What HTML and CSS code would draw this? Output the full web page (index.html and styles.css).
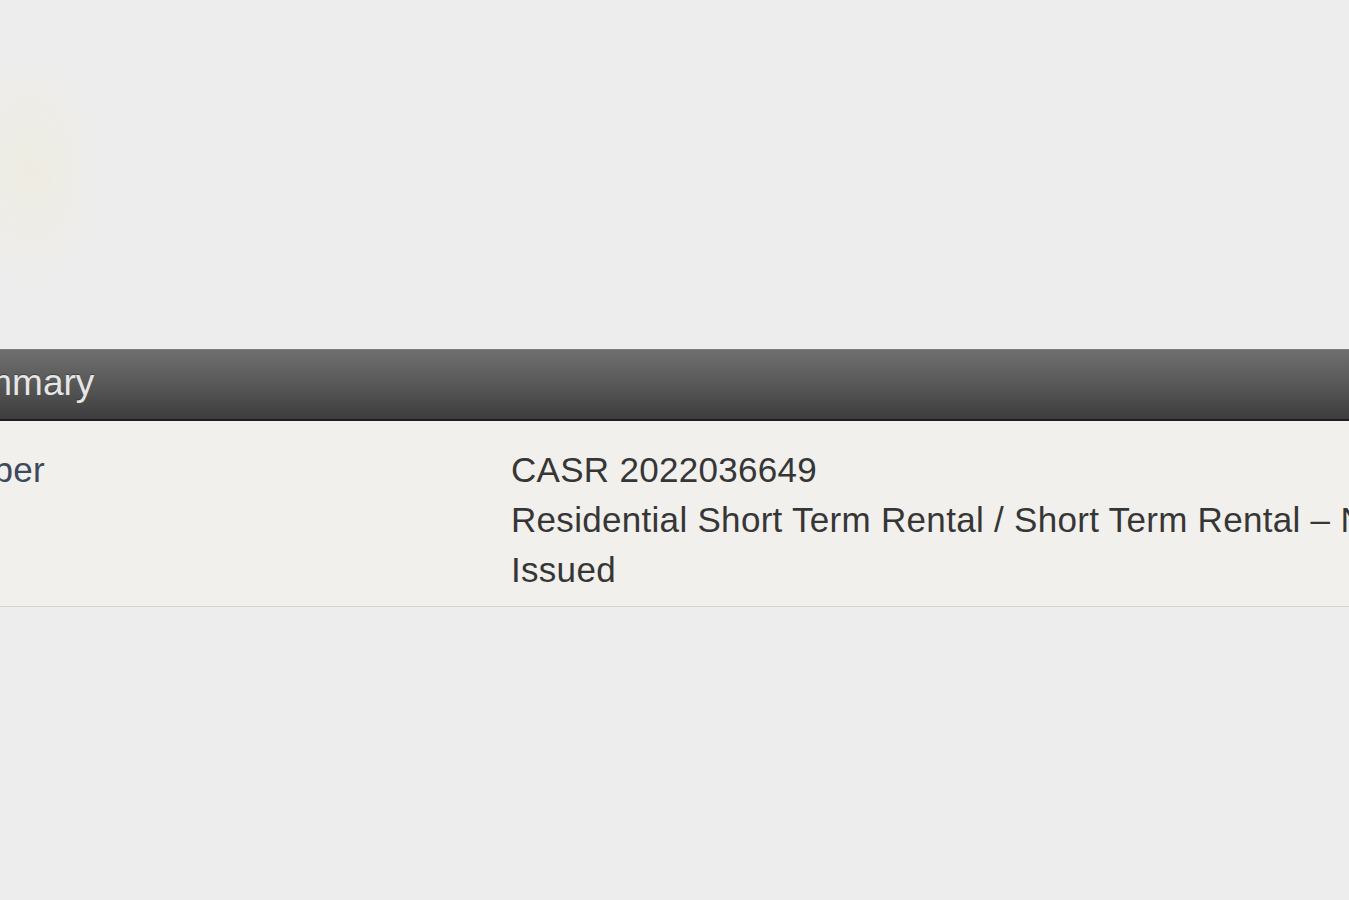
FILE: index.html
```html
<!DOCTYPE html>
<html lang="en">
<head>
<meta charset="utf-8">
<title>Record Summary</title>
<link rel="stylesheet" href="styles.css">
</head>
<body>
  <main class="page">
    <section class="summary">
      <h2 class="summary-title">Summary</h2>
      <div class="summary-row">
        <div class="summary-label">Record Number</div>
        <div class="summary-values">
          <div class="summary-line">CASR 2022036649</div>
          <div class="summary-line">Residential Short Term Rental / Short Term Rental – Non-Owner Occupied</div>
          <div class="summary-line">Issued</div>
        </div>
      </div>
    </section>
  </main>
</body>
</html>
```

FILE: styles.css
```css
html, body {
  margin: 0;
  padding: 0;
}

body {
  width: 1349px;
  height: 900px;
  overflow: hidden;
  background:
    radial-gradient(ellipse 80px 130px at 30px 170px, rgba(238, 236, 224, 0.9), rgba(237, 237, 238, 0) 100%),
    #ededee;
  font-family: "Liberation Sans", Arial, Helvetica, sans-serif;
}

.page {
  padding-top: 349px;
}

/* the panel is wider than the window and starts left of it */
.summary {
  margin-left: -260px;
  width: 1900px;
}

.summary-title {
  margin: 0;
  height: 72px;
  padding-left: 196px;
  box-sizing: border-box;
  border-top: 1px solid #7c7c7c;
  border-bottom: 2px solid #1e1e1e;
  background: linear-gradient(to bottom, #6f6f6f 0%, #5a5a5a 45%, #3d3d3d 100%);
  color: #e6e6e6;
  font-size: 37px;
  font-weight: normal;
  line-height: 66px;
  text-shadow: 0 -1px 0 rgba(0, 0, 0, 0.35);
  white-space: nowrap;
}

.summary-row {
  display: grid;
  grid-template-columns: 771px 1fr;
  padding: 24px 0 11px;
  background: #f1f0ec;
  border-bottom: 1px solid #d3d3d1;
  font-size: 35px;
  line-height: 50px;
  letter-spacing: 0.3px;
}

.summary-label {
  padding-left: 54px;
  color: #3b4a5c;
  white-space: nowrap;
}

.summary-values {
  color: #363636;
}

.summary-line {
  white-space: nowrap;
}
```
